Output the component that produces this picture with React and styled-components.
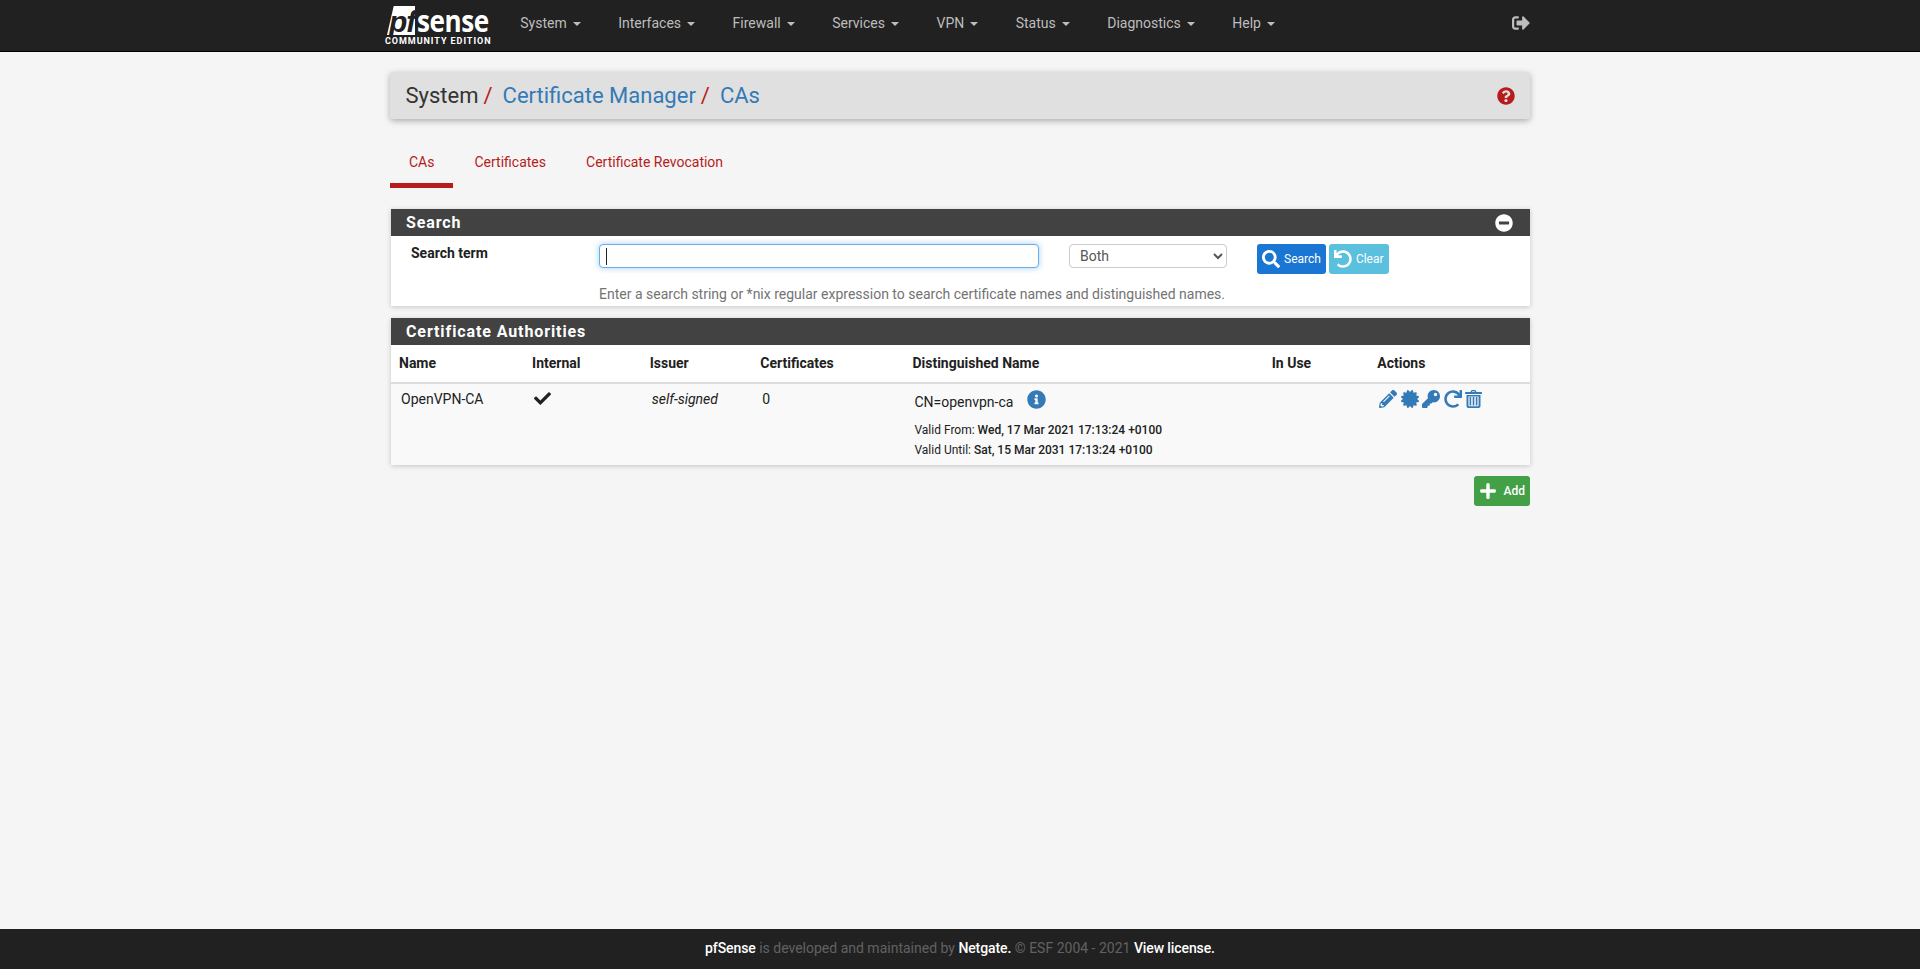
import React from 'react';
import styled, { createGlobalStyle } from 'styled-components';
import {
  FaCertificate, FaCheck, FaInfoCircle, FaKey, FaMinusCircle, FaPencilAlt, FaPlus,
  FaQuestionCircle, FaRedo, FaSearch, FaSignOutAlt, FaUndo,
} from 'react-icons/fa';

const GlobalStyle = createGlobalStyle`
  html, body { margin: 0; padding: 0; }
  body {
    background: #f5f5f5;
    color: #212121;
    font-family: Roboto, "Liberation Sans", sans-serif;
    font-size: 14px;
    line-height: 20px;
  }
`;

const Page = styled.div`
  display: flex;
  flex-direction: column;
  height: 969px;
  overflow: hidden;
`;

const Navbar = styled.nav`
  background: #212121;
  border-bottom: 1px solid #000;
  display: flex;
  flex: none;
  height: 51px;
  justify-content: center;
`;

const NavInner = styled.div`
  box-sizing: border-box;
  display: flex;
  padding: 0 15px 0 10px;
  width: 1170px;
`;

const Logo = styled.a`
  box-sizing: border-box;
  display: flex;
  flex: none;
  flex-direction: column;
  height: 51px;
  padding-top: 6px;
  width: 116.5px;
`;

const LogoTop = styled.div`
  display: flex;
  height: 29px;
  padding-left: 2px;
`;

const LogoMark = styled.span`
  background: #fff;
  clip-path: polygon(24% 0, 100% 0, 100% 100%, 0 100%);
  color: #212121;
  font-family: "Liberation Sans", sans-serif;
  font-size: 30px;
  font-style: italic;
  font-weight: 700;
  height: 29px;
  letter-spacing: -1px;
  line-height: 32px;
  padding-left: 2px;
  width: 26px;
`;

const LogoWord = styled.span`
  color: #fff;
  font-family: "Open Sans", sans-serif;
  font-size: 30px;
  font-weight: 700;
  letter-spacing: -0.5px;
  line-height: 29px;
  margin-left: 2px;
  transform: scaleX(0.87);
  transform-origin: left;
`;

const LogoEdition = styled.span`
  color: #fff;
  font-size: 9px;
  font-weight: 700;
  letter-spacing: 0.95px;
  line-height: 9px;
  margin-top: 2px;
  white-space: nowrap;
`;

const NavItem = styled.a`
  align-items: center;
  color: #bdbdbd;
  display: flex;
  height: 46.5px;
  padding: 0 18.75px;
`;

const Caret = styled.span`
  border-left: 4px solid transparent;
  border-right: 4px solid transparent;
  border-top: 4px solid #bdbdbd;
  margin-left: 6px;
  margin-top: 2px;
`;

const SignOut = styled.a`
  align-items: center;
  color: #bdbdbd;
  display: flex;
  font-size: 18px;
  height: 46px;
  margin-left: auto;
`;

const Main = styled.main`
  flex: 1;
  margin: 0 auto;
  padding-top: 20px;
  width: 1140px;
`;

const Breadcrumb = styled.div`
  align-items: center;
  background: #e0e0e0;
  border-radius: 3px;
  box-shadow: 0 2px 6px rgba(0, 0, 0, 0.3);
  display: flex;
  font-size: 22px;
  height: 47px;
  justify-content: space-between;
  padding: 0 15px 0 15.5px;
`;

const Crumbs = styled.div`
  align-items: center;
  display: flex;
`;

const Crumb = styled.a`
  color: ${props => (props.$link ? '#337ab7' : '#333')};
`;

const Slash = styled.span`
  color: #b71c1c;
  margin: 0 10px 0 5px;
`;

const HelpIcon = styled.a`
  color: #b71c1c;
  display: flex;
  font-size: 18px;
`;

const Tabs = styled.ul`
  display: flex;
  gap: 2px;
  list-style: none;
  margin: 22px 0 21px;
  padding: 0;
`;

const Tab = styled.li`
  border-bottom: 5px solid ${props => (props.$active ? '#b71c1c' : 'transparent')};
  box-sizing: border-box;
  color: #b71c1c;
  height: 47px;
  padding: 11px 19px 0;
`;

const Panel = styled.section`
  background: #fff;
  box-shadow: 0 1px 5px rgba(0, 0, 0, 0.2);
  margin-bottom: 12px;
  margin-left: 1px;
`;

const PanelHeading = styled.h2`
  align-items: center;
  background: #424242;
  box-sizing: border-box;
  color: #fff;
  display: flex;
  font-size: 16px;
  font-weight: 700;
  height: 27px;
  justify-content: space-between;
  letter-spacing: 0.9px;
  margin: 0;
  padding: 0 17px 0 15px;
`;

const Collapse = styled.span`
  color: #fff;
  display: flex;
  font-size: 18px;
`;

const SearchBody = styled.div`
  box-sizing: border-box;
  display: grid;
  grid-template-columns: 208px 440px 30px 158px 30px 1fr;
  height: 70px;
  padding-top: 8px;
`;

const SearchLabel = styled.label`
  font-weight: 700;
  line-height: 18px;
  padding-left: 20px;
`;

const InputWrap = styled.div`
  position: relative;
`;

const TextInput = styled.input`
  border: 1px solid #66afe9;
  border-radius: 4px;
  box-shadow: 0 0 6px rgba(102, 175, 233, 0.6);
  box-sizing: border-box;
  caret-color: transparent;
  display: block;
  height: 24px;
  outline: none;
  width: 100%;
`;

const FakeCaret = styled.span`
  background: #212121;
  height: 17px;
  left: 7px;
  position: absolute;
  top: 4px;
  width: 1px;
`;

const Select = styled.select`
  background: #fff;
  border: 1px solid #ccc;
  border-radius: 4px;
  color: #555;
  font-family: inherit;
  font-size: 14px;
  height: 24px;
  padding: 0 6px;
  width: 158px;
`;

const ButtonRow = styled.div`
  display: flex;
  gap: 3px;
`;

const Button = styled.a`
  align-items: center;
  background: ${props => props.$bg};
  border-radius: 3px;
  box-sizing: border-box;
  color: #fff;
  display: flex;
  font-size: 12px;
  font-weight: ${props => props.$weight || 400};
  gap: ${props => props.$gap || 4}px;
  height: 30px;
  padding: 0 5px;
  svg { font-size: 18px; }
`;

const HelpText = styled.div`
  color: #737373;
  grid-column: 2 / 7;
  margin-top: 7px;
`;

const Table = styled.table`
  border-collapse: collapse;
  table-layout: fixed;
  width: 100%;
`;

const Th = styled.th`
  border-bottom: 2px solid #ddd;
  box-sizing: border-box;
  font-size: 14px;
  font-weight: 700;
  height: 38px;
  padding: 0 8px 1px;
  text-align: left;
`;

const Td = styled.td`
  background: #f9f9f9;
  box-sizing: border-box;
  font-style: ${props => (props.$italic ? 'italic' : 'normal')};
  height: 82px;
  padding: 5px 10px 0;
  vertical-align: top;
`;

const CheckMark = styled.span`
  color: #212121;
  display: flex;
  font-size: 17px;
  padding-top: 1px;
`;

const NameLine = styled.div`
  align-items: center;
  display: flex;
  gap: 14px;
  height: 26px;
  margin-bottom: 6px;
`;

const NameInfo = styled.span`
  color: #337ab7;
  display: flex;
  font-size: 19px;
  margin-top: -5px;
`;

const ValidLine = styled.div`
  font-size: 12px;
  line-height: 19.5px;
  b { font-weight: 500; }
`;

const ActionIcons = styled.div`
  align-items: center;
  color: #337ab7;
  display: flex;
  font-size: 18px;
  gap: 3.5px;
  padding-top: 1px;
`;

const AddRow = styled.div`
  display: flex;
  justify-content: flex-end;
  margin-top: -1px;
`;

const Footer = styled.footer`
  background: #212121;
  color: #616161;
  flex: none;
  height: 40px;
  line-height: 38px;
  text-align: center;
  b { color: #fff; font-weight: 500; letter-spacing: -0.1px; }
`;

// font-awesome 4 style bin, the package only has the newer shape
const TrashIcon = () => (
  <svg width="17" height="18" viewBox="0 0 17 18" fill="currentColor" fillRule="evenodd">
    <path d="M5.5 2 L6.4 .3 Q6.6 0 7 0 H10 Q10.4 0 10.6 .3 L11.5 2 H16.2 Q17 2 17 2.7 V4 H0 V2.7 Q0 2 .8 2 Z M7 2 H10 L9.6 1.2 H7.4 Z" />
    <path d="M1.5 5 H15.5 V16 Q15.5 18 13.5 18 H3.5 Q1.5 18 1.5 16 Z M3.4 6.5 V15.2 Q3.4 16.2 4.4 16.2 H12.6 Q13.6 16.2 13.6 15.2 V6.5 Z" />
    <path d="M4.6 7 H6.2 V15.4 H4.6 Z M7.7 7 H9.3 V15.4 H7.7 Z M10.8 7 H12.4 V15.4 H10.8 Z" />
  </svg>
);

const menu = ['System', 'Interfaces', 'Firewall', 'Services', 'VPN', 'Status', 'Diagnostics', 'Help'];
const columns = [
  ['Name', 133], ['Internal', 117.5], ['Issuer', 110.5], ['Certificates', 152],
  ['Distinguished Name', 359], ['In Use', 105.5], ['Actions', 160.5],
];

const App = () => (
  <Page>
    <GlobalStyle />
    <Navbar>
      <NavInner>
        <Logo>
          <LogoTop>
            <LogoMark>pf</LogoMark>
            <LogoWord>sense</LogoWord>
          </LogoTop>
          <LogoEdition>COMMUNITY EDITION</LogoEdition>
        </Logo>
        {menu.map(item => (
          <NavItem key={item}>{item}<Caret /></NavItem>
        ))}
        <SignOut><FaSignOutAlt /></SignOut>
      </NavInner>
    </Navbar>

    <Main>
      <Breadcrumb>
        <Crumbs>
          <Crumb>System</Crumb><Slash>/</Slash>
          <Crumb $link>Certificate Manager</Crumb><Slash>/</Slash>
          <Crumb $link>CAs</Crumb>
        </Crumbs>
        <HelpIcon><FaQuestionCircle /></HelpIcon>
      </Breadcrumb>

      <Tabs>
        <Tab $active>CAs</Tab>
        <Tab>Certificates</Tab>
        <Tab>Certificate Revocation</Tab>
      </Tabs>

      <Panel>
        <PanelHeading>Search<Collapse><FaMinusCircle /></Collapse></PanelHeading>
        <SearchBody>
          <SearchLabel>Search term</SearchLabel>
          <InputWrap><TextInput readOnly /><FakeCaret /></InputWrap>
          <span />
          <Select defaultValue="Both"><option>Both</option></Select>
          <span />
          <ButtonRow>
            <Button $bg="#1976d2"><FaSearch />Search</Button>
            <Button $bg="#5bc0de"><FaUndo />Clear</Button>
          </ButtonRow>
          <span />
          <HelpText>Enter a search string or *nix regular expression to search certificate names and distinguished names.</HelpText>
        </SearchBody>
      </Panel>

      <Panel>
        <PanelHeading>Certificate Authorities</PanelHeading>
        <Table>
          <colgroup>
            {columns.map(([name, width]) => <col key={name} width={width} />)}
          </colgroup>
          <thead>
            <tr>{columns.map(([name]) => <Th key={name}>{name}</Th>)}</tr>
          </thead>
          <tbody>
            <tr>
              <Td>OpenVPN-CA</Td>
              <Td><CheckMark><FaCheck /></CheckMark></Td>
              <Td $italic>self-signed</Td>
              <Td>0</Td>
              <Td>
                <NameLine>CN=openvpn-ca<NameInfo><FaInfoCircle /></NameInfo></NameLine>
                <ValidLine>Valid From: <b>Wed, 17 Mar 2021 17:13:24 +0100</b></ValidLine>
                <ValidLine>Valid Until: <b>Sat, 15 Mar 2031 17:13:24 +0100</b></ValidLine>
              </Td>
              <Td />
              <Td>
                <ActionIcons>
                  <FaPencilAlt /><FaCertificate /><FaKey /><FaRedo /><TrashIcon />
                </ActionIcons>
              </Td>
            </tr>
          </tbody>
        </Table>
      </Panel>

      <AddRow>
        <Button $bg="#43a047" $weight={500} $gap={7}><FaPlus />Add</Button>
      </AddRow>
    </Main>

    <Footer>
      <b>pfSense</b> is developed and maintained by <b>Netgate.</b> © ESF 2004 - 2021 <b>View license.</b>
    </Footer>
  </Page>
);

export default App;
